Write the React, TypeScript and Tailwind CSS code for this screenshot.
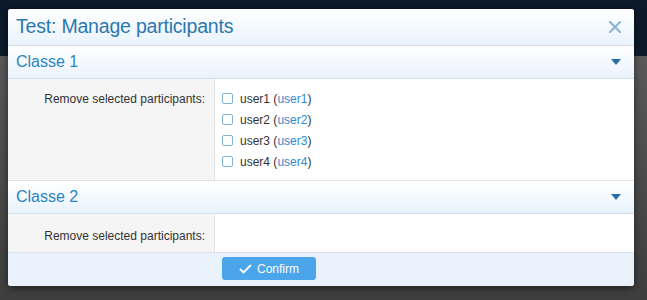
import React from "react";

const users = ["user1", "user2", "user3", "user4"];

function Caret() {
  return (
    <svg width="10" height="6" viewBox="0 0 10 6" className="mr-[13px]">
      <path d="M0 0 L10 0 L5 6 Z" fill="#2a6fa8" />
    </svg>
  );
}

function SectionHeader({ title }: { title: string }) {
  return (
    <div className="h-[33px] flex items-center justify-between pl-[8px] border-b border-[#d6dfe7] bg-gradient-to-b from-white to-[#e9f3fc]">
      <span className="text-[16px] text-[#2b84c2]">{title}</span>
      <Caret />
    </div>
  );
}

export default function App() {
  return (
    <div
      className="w-[647px] h-[300px] relative overflow-hidden"
      style={{ fontFamily: '"Liberation Sans", Arial, sans-serif' }}
    >
      <div className="absolute inset-0 flex flex-col">
        <div className="h-[56px] bg-[#0c1a2b]" />
        <div className="flex-1 bg-gradient-to-b from-[#5a5a5a] to-[#3e3e3e]" />
      </div>
      <div className="absolute left-[8px] top-[9px] w-[626px] h-[277px] bg-white rounded-[3px] overflow-hidden flex flex-col shadow-[0_2px_8px_rgba(0,0,0,0.5)]">
        <div className="h-[37px] flex items-center justify-between pl-[8px] pr-[13px] border-b border-[#d6dfe7] bg-gradient-to-b from-white to-[#eaf3fc]">
          <span className="text-[19.5px] text-[#2a78b0] tracking-[-0.2px]">Test: Manage participants</span>
          <svg width="12" height="12" viewBox="0 0 12 12">
            <path d="M1 1 L11 11 M11 1 L1 11" stroke="#8db6d6" strokeWidth="2.2" strokeLinecap="round" />
          </svg>
        </div>
        <SectionHeader title="Classe 1" />
        <div className="flex border-b border-[#dde3e8]">
          <div className="w-[207px] bg-[#f5f5f5] border-r border-[#e4e4e4] text-right pr-[9px] pt-[11px] text-[12px] text-[#333]">
            Remove selected participants:
          </div>
          <div className="flex-1 flex flex-col gap-[8px] pl-[7px] pt-[13px] pb-[12px]">
            {users.map((u) => (
              <div key={u} className="flex items-center h-[13px] text-[12px] text-[#333]">
                <span className="w-[11px] h-[11px] border border-[#7fb2d8] rounded-[2px] bg-white mr-[7px]" />
                <span>
                  {u} (<span className="text-[#3489cf]">{u}</span>)
                </span>
              </div>
            ))}
          </div>
        </div>
        <SectionHeader title="Classe 2" />
        <div className="flex h-[39px] border-b border-[#dde3e8]">
          <div className="w-[207px] bg-[#f5f5f5] border-r border-[#e4e4e4] text-right pr-[9px] pt-[13px] text-[12px] text-[#333]">
            Remove selected participants:
          </div>
          <div className="flex-1" />
        </div>
        <div className="flex-1 bg-[#e9f2fb] flex items-start pl-[214px] pt-[4px]">
          <button className="w-[94px] h-[23px] rounded-[3px] bg-[#4aa5ea] text-white text-[12px] flex items-center justify-center gap-[5px]">
            <svg width="13" height="10" viewBox="0 0 13 10">
              <path d="M1 5 L4.5 8.5 L12 1" stroke="white" strokeWidth="1.8" fill="none" />
            </svg>
            Confirm
          </button>
        </div>
      </div>
    </div>
  );
}
